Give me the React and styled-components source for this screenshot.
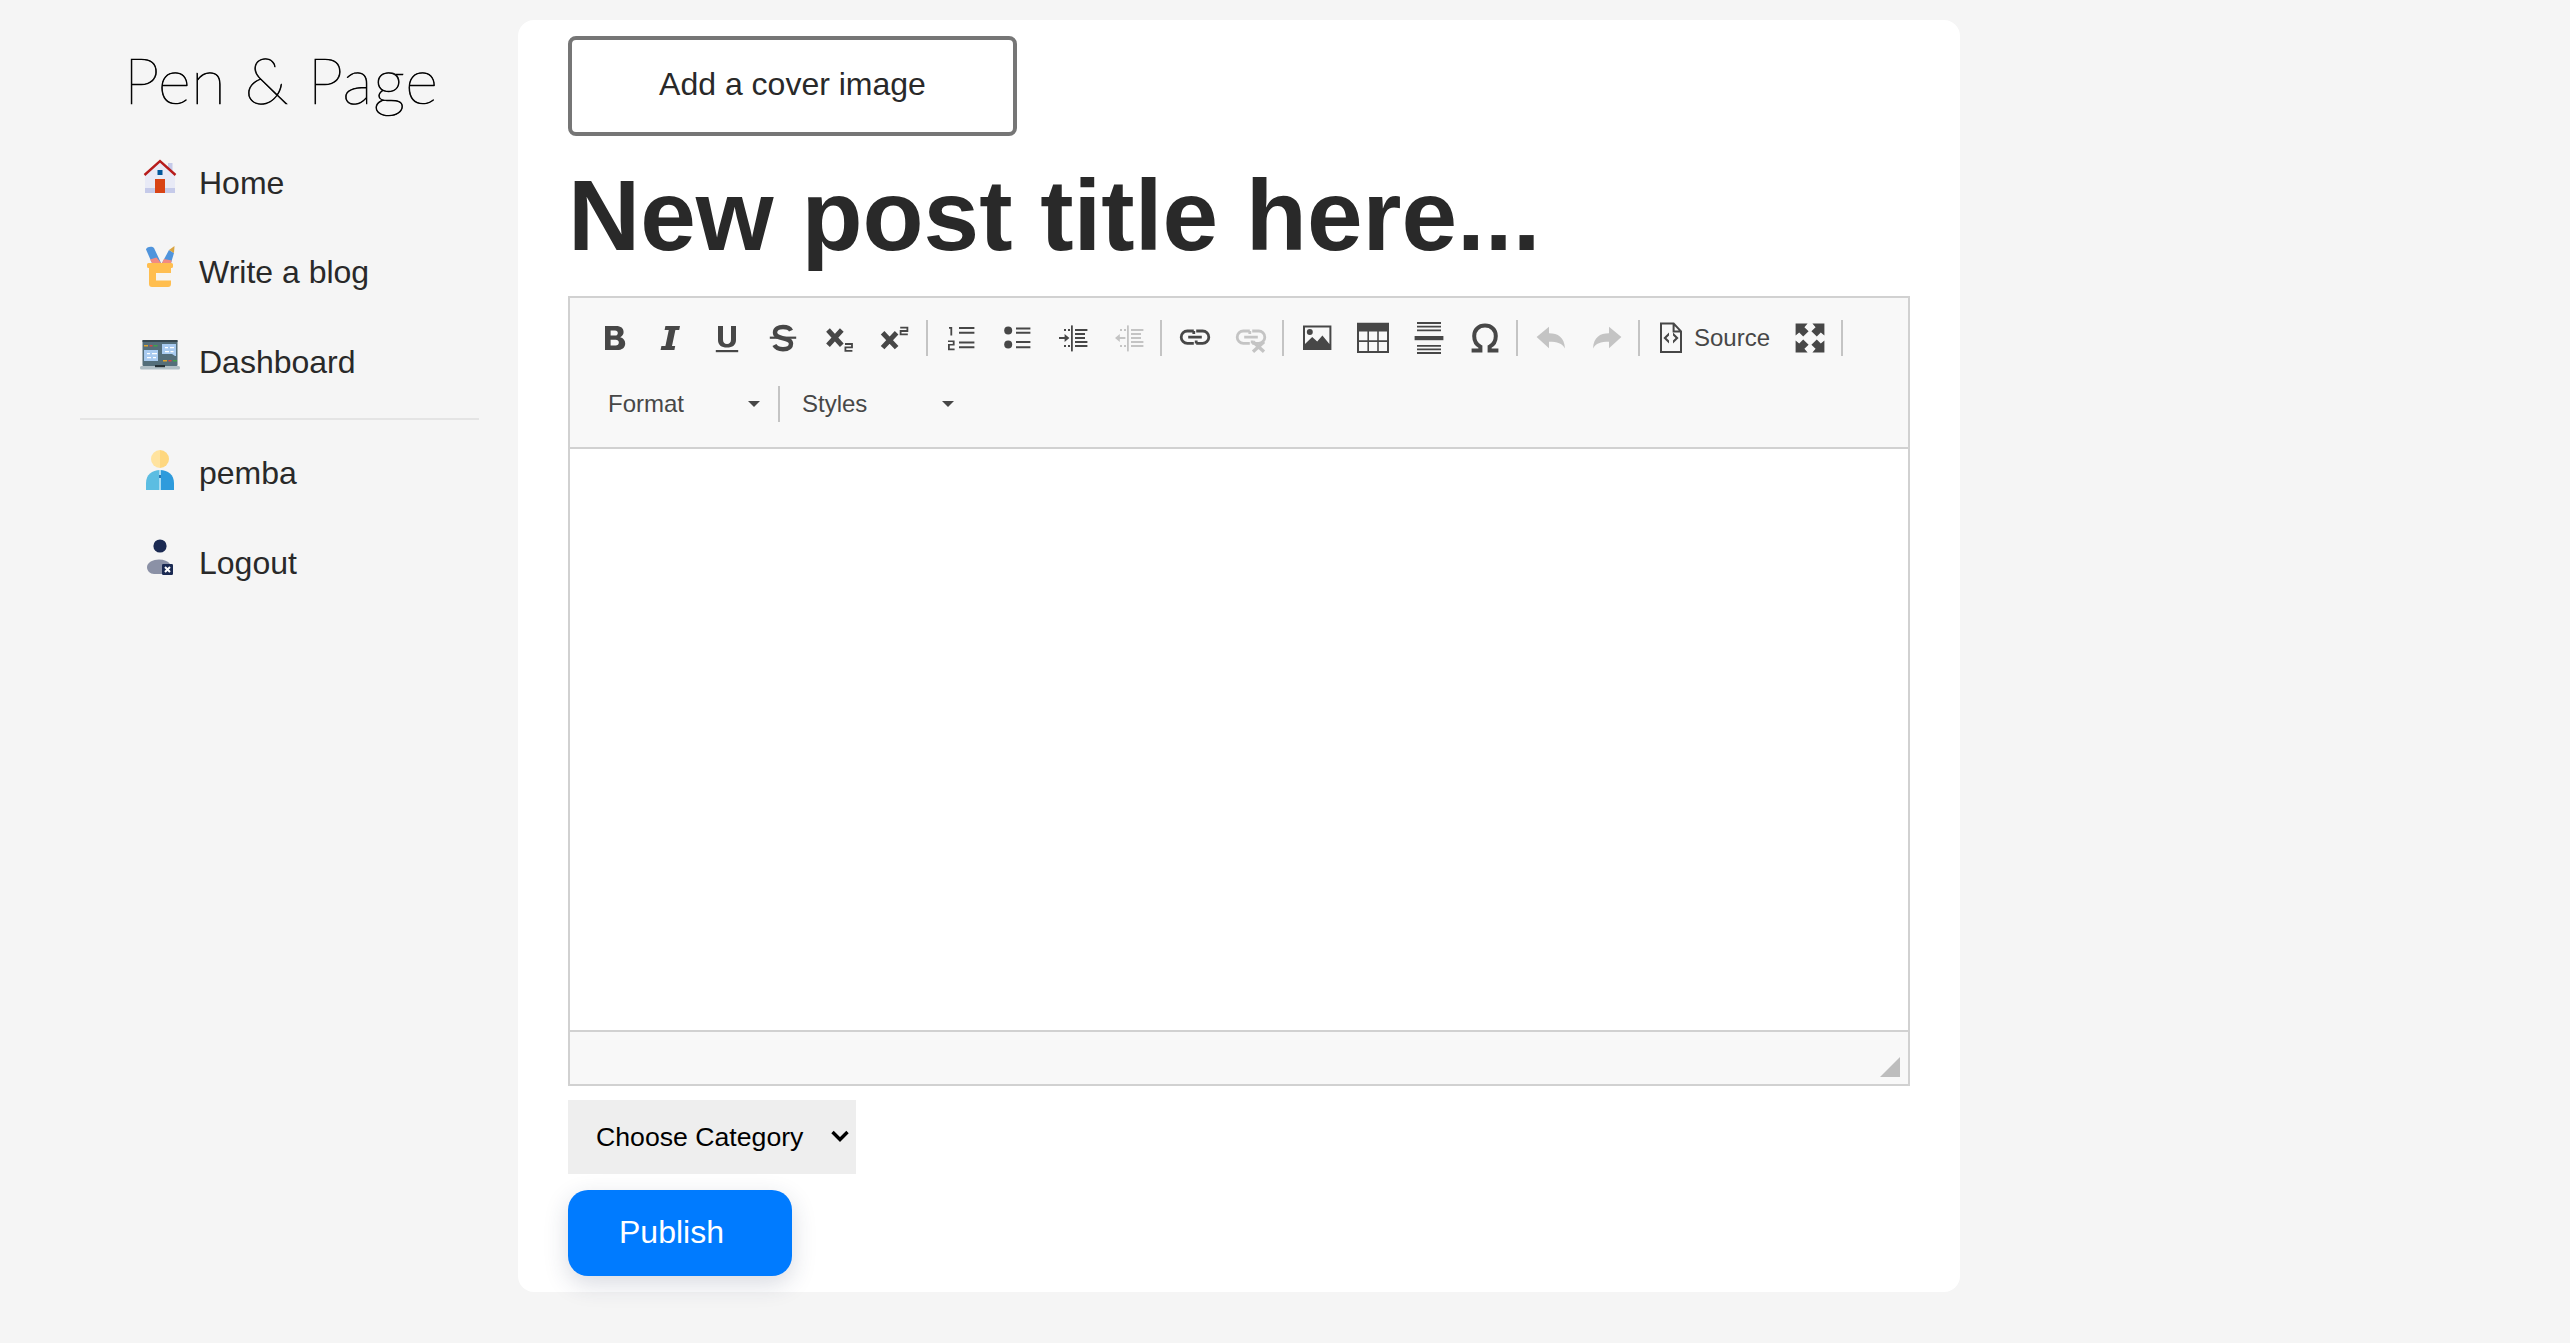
import React from "react";
import styled, { createGlobalStyle } from "styled-components";

const Global = createGlobalStyle`
  html, body { margin: 0; padding: 0; background: #f5f5f5; }
  body { font-family: "Liberation Sans", Arial, sans-serif; color: #292929; }
`;

const Page = styled.div`
  display: flex;
  align-items: flex-start;
  min-height: 1343px;
  box-sizing: border-box;
  padding-top: 20px;
`;
const Sidebar = styled.aside`
  width: 518px;
  flex: none;
  box-sizing: border-box;
  padding: 0 39px 0 80px;
`;
const Logo = styled.div`
  height: 118.5px;
  display: flex;
  align-items: center;
  justify-content: center;
  padding-left: 3px;
  font-family: Lato, "Liberation Sans", sans-serif;
  font-weight: 200;
  font-size: 64px;
  letter-spacing: 0.3px;
  -webkit-text-stroke: 0.7px #000;
  color: #000;
  white-space: nowrap;
`;
const NavItem = styled.a`
  display: flex;
  align-items: center;
  gap: 19px;
  height: 89.5px;
  padding-left: 60px;
  font-size: 32px;
  color: #292929;
`;
const NavIcon = styled.svg`
  width: 40px;
  height: 40px;
  flex: none;
  margin-bottom: 14px;
  overflow: visible;
`;
const Divider = styled.hr`
  border: 0;
  height: 2px;
  background: #e4e4e4;
  margin: 11px 0 9px;
`;
const Card = styled.main`
  width: 1442px;
  height: 1272px;
  flex: none;
  box-sizing: border-box;
  background: #fff;
  border-radius: 16px;
  padding: 16px 50px 0;
`;
const CoverButton = styled.button`
  display: block;
  width: 449px;
  height: 100px;
  box-sizing: border-box;
  background: #fff;
  border: 4px solid #767676;
  border-radius: 8px;
  padding: 0 0 3px;
  font: 32px "Liberation Sans", Arial, sans-serif;
  color: #292929;
`;
const Title = styled.h1`
  margin: 0;
  height: 160px;
  display: flex;
  align-items: center;
  padding-bottom: 2px;
  box-sizing: border-box;
  font-size: 100px;
  font-weight: 700;
  color: #292929;
  white-space: nowrap;
`;
const Editor = styled.div`
  border: 2px solid #d1d1d1;
`;
const Toolbar = styled.div`
  background: #f8f8f8;
  border-bottom: 2px solid #d1d1d1;
  padding: 7px 0 10px 17px;
`;
const ToolRow = styled.div`
  display: flex;
  align-items: center;
  height: 66px;
`;
const ToolButton = styled.span`
  width: ${(p) => (p.$wide ? "137px" : "56px")};
  height: 48px;
  flex: none;
  display: flex;
  align-items: center;
  justify-content: ${(p) => (p.$wide ? "flex-start" : "center")};
  gap: 7px;
  box-sizing: border-box;
  padding-left: ${(p) => (p.$wide ? "10px" : "0")};
  font-size: 24px;
  color: #474747;
`;
const ToolIcon = styled.svg`
  width: 32px;
  height: 32px;
  flex: none;
  color: ${(p) => (p.$muted ? "#c4c4c4" : "#474747")};
`;
const Sep = styled.span`
  width: 2px;
  height: 36px;
  flex: none;
  margin: 0 5px 0 3px;
  background: #c4c4c4;
`;
const Combo = styled.span`
  width: ${(p) => p.$w}px;
  flex: none;
  display: flex;
  align-items: center;
  justify-content: space-between;
  box-sizing: border-box;
  padding: 0 5px 0 21px;
  font-size: 24px;
  color: #474747;
`;
const Caret = styled.i`
  width: 0;
  height: 0;
  border-left: 6px solid transparent;
  border-right: 6px solid transparent;
  border-top: 6px solid #474747;
`;
const ComboSep = styled.span`
  width: 2px;
  height: 36px;
  flex: none;
  margin: 0 1px 0 13px;
  background: #c4c4c4;
`;
const Writing = styled.div`
  height: 581px;
  background: #fff;
`;
const Footer = styled.div`
  height: 54px;
  box-sizing: border-box;
  background: #f8f8f8;
  border-top: 2px solid #d1d1d1;
  display: flex;
  justify-content: flex-end;
  align-items: flex-end;
  padding: 0 8px 7px 0;
`;
const Grip = styled.span`
  width: 20px;
  height: 20px;
  background: #bdbdbd;
  clip-path: polygon(100% 0, 100% 100%, 0 100%);
`;
const SelectWrap = styled.div`
  position: relative;
  width: 288px;
  height: 74px;
  margin: 14px 0 16px;
`;
const CategorySelect = styled.select`
  appearance: none;
  width: 100%;
  height: 100%;
  border: 0;
  border-radius: 0;
  background: #eee;
  color: #000;
  padding: 0 0 0 28px;
  font: 26.67px "Liberation Sans", Arial, sans-serif;
`;
const Chevron = styled.svg`
  position: absolute;
  right: 6px;
  top: 29px;
  width: 20px;
  height: 14px;
  pointer-events: none;
`;
const Publish = styled.button`
  display: block;
  width: 224px;
  height: 86px;
  box-sizing: border-box;
  border: 0;
  border-radius: 20px;
  background: #007bff;
  color: #fff;
  font: 32px "Liberation Sans", Arial, sans-serif;
  text-align: left;
  padding: 0 0 2px 51px;
  box-shadow: 0 8px 24px rgba(40, 50, 90, 0.18);
`;

const nav = (vb, body) => (
  <NavIcon viewBox={vb} aria-hidden="true">{body}</NavIcon>
);

const HomeIcon = () => nav("10 6 40 40", <>
  <rect x="38" y="13" width="4.500" height="9" fill="#c5cae9" />
  <path d="M15 25 30 12l15 13v18H15z" fill="#e8eaf6" />
  <rect x="15" y="38" width="30" height="5" fill="#c5cae9" />
  <rect x="25" y="29" width="10" height="14" fill="#d84315" />
  <rect x="27.500" y="20" width="5" height="5" fill="#01579b" />
  <path d="M14.500 25 30 11l15.500 14" fill="none" stroke="#b71c1c" strokeWidth="2.400" />
</>);
const WriteIcon = () => nav("10 5 40 40", <>
  <path d="M16 8.500C16 6 22 4.500 24 7l7 15h-9z" fill="#4f94dc" />
  <path d="M20 18.500l6.500-2L31 22h-9z" fill="#f28b82" />
  <path d="M32 22 39 9l5 3-3 10z" fill="#4f94dc" />
  <path d="M39 9l5.500-4-.5 7z" fill="#d9a441" />
  <path d="M32 22l2-4 7.800 1.500L41 22z" fill="#f28b82" />
  <path d="M17 23.500A1.500 1.500 0 0 1 18.500 22h23a1.500 1.500 0 0 1 1.500 1.500v2a1.500 1.500 0 0 1-1.500 1.500H41v16a3 3 0 0 1-3 3H22a3 3 0 0 1-3-3V27h-.5a1.500 1.500 0 0 1-1.500-1.500z" fill="#ffbe4f" />
  <rect x="26" y="32" width="15" height="7.500" fill="#f7f4ee" />
</>);
const DashIcon = () => nav("10 4 40 40", <>
  <rect x="12.500" y="9" width="35" height="26" rx="1" fill="#546e7a" />
  <rect x="12.500" y="9" width="35" height="2" fill="#37474f" />
  <rect x="10" y="35" width="40" height="3.500" rx="1.500" fill="#b0bec5" />
  <rect x="25" y="34" width="10" height="2.200" fill="#263238" />
  <path d="M14 19h14v11H14z" fill="#a9cbf0" />
  <path d="M32 13h14v12h-1l-3-2H32z" fill="#a9cbf0" />
  <path d="M17 22h3v1.200h-3zM22 22h5v1.200h-5zM17 26h4v1.200h-4zM23 26h3v1.200h-3zM35 16h3v1.200h-3zM40 16h4v1.200h-4zM35 20h4v1.200h-4zM40.500 20h3v1.200h-3z" fill="#fff" />
  <path d="M14 14h4v1.500h-4z" fill="#e0a52e" />
  <path d="M19.500 14h3v1.500h-3z" fill="#d64545" />
  <path d="M23.500 14h4v1.500h-4z" fill="#43a047" />
  <path d="M33 29h4v1.500h-4z" fill="#e0a52e" />
  <path d="M38.500 29h3v1.500h-3z" fill="#d64545" />
  <path d="M43 29h4v1.500h-4z" fill="#43a047" />
</>);
const UserIcon = () => nav("10 5 40 40", <>
  <path d="M30 8a9 9 0 0 0 0 18z" fill="#ffe39f" />
  <path d="M30 8a9 9 0 0 1 0 18z" fill="#fed77f" />
  <path d="M30 28c-8 0-14 5-14 13v7h14z" fill="#5cbde2" />
  <path d="M30 28c8 0 14 5 14 13v7H30z" fill="#2e9bdc" />
  <rect x="29" y="28" width="2" height="20" fill="#a9dcf2" />
  <rect x="29" y="33" width="2" height="3" fill="#2b7bb5" />
</>);
const LogoutIcon = () => nav("10 5 40 40", <>
  <circle cx="30" cy="15" r="6.600" fill="#1b2a52" />
  <path d="M17 36c0-4.500 6-7.500 12-7.500 5 0 9 1.500 11 4.500v10H24c-4 0-7-3-7-7z" fill="#8b91a6" />
  <rect x="32" y="33" width="11" height="11" rx="1.200" fill="#1b2a52" />
  <path d="M35 36l5 5M40 36l-5 5" stroke="#fff" strokeWidth="2" />
</>);

const Tool = ({ muted, children }) => (
  <ToolIcon viewBox="0 0 16 16" $muted={muted} fill="currentColor" aria-hidden="true">{children}</ToolIcon>
);
const Lines = ({ x1, x2, ys, w = 1 }) => (
  <path d={ys.map((y) => `M${x1} ${y}H${x2}`).join("")} stroke="currentColor" strokeWidth={w} fill="none" />
);
const IndentBody = ({ dir }) => (
  <>
    <rect x="7" y="1.700" width="0.900" height="13" />
    <Lines x1="9" x2="15.200" ys={[4, 10, 12]} />
    <Lines x1="9" x2="14" ys={[6, 8]} />
    <path d="M3.500 3.500h1v1h-1zM5.500 3.500h1v1h-1zM3.500 11.500h1v1h-1zM5.500 11.500h1v1h-1z" />
    {dir === "in"
      ? <path d="M1 7.500h2.800V6L6.200 8 3.800 10V8.500H1z" />
      : <path d="M6.200 7.500H3.400V6L1 8l2.400 2V8.500h2.800z" />}
  </>
);
const LinkBody = () => (
  <path d="M7.400 4.500H4.200a3.100 3.100 0 0 0 0 6.200h3.200M8.600 4.500h3.200a3.100 3.100 0 0 1 0 6.200H8.600M4.600 7.600h6.800M7.400 4.500v1.500M8.600 9.200v1.500" fill="none" stroke="currentColor" strokeWidth="1.400" />
);

const Icons = {
  bold: <Tool><path fillRule="evenodd" d="M3 2h5.600c2.300 0 3.700 1.100 3.700 3 0 1.200-.6 2.100-1.700 2.600 1.500.4 2.500 1.500 2.500 3.100 0 2.100-1.600 3.300-4 3.300H3zM5.800 4.200v2.600h2.200c.9 0 1.400-.5 1.400-1.300S8.900 4.200 8 4.200zM5.800 8.900v2.900h2.500c1 0 1.600-.5 1.600-1.500s-.6-1.400-1.600-1.400z" /></Tool>,
  italic: <Tool><path d="M5.200 2h7.300l-.4 2h-1.900L8.500 12h1.600l-.4 2H2.800l.4-2h2L6.900 4H4.800z" /></Tool>,
  underline: <Tool><path d="M3.500 2H6v6.800c0 1.500.7 2.200 2 2.200s2-.7 2-2.200V2h2.500v7c0 2.500-1.700 3.800-4.500 3.800S3.500 11.500 3.500 9z" /><rect x="2.400" y="14" width="11.200" height="1.100" /></Tool>,
  strike: <Tool><path d="M12 4.300C11.400 3 10 2.500 8 2.500c-2.300 0-4 .9-4 2.800 0 3.900 8 1.900 8 5.600 0 1.900-1.800 2.700-4 2.700-2.200 0-3.600-.7-4.300-2.100" fill="none" stroke="currentColor" strokeWidth="2.200" /><rect x="1.400" y="7.300" width="13.200" height="1.100" /></Tool>,
  sub: <Tool><path d="M2.500 4 9.400 11.600M9.400 4 2.500 11.600" fill="none" stroke="currentColor" strokeWidth="2.500" /><path d="M11 11h3.500v1.700H11.200v1.700h3.500" fill="none" stroke="currentColor" strokeWidth=".9" /></Tool>,
  sup: <Tool><path d="M1.800 5.400 8.800 12.800M8.800 5.400 1.800 12.800" fill="none" stroke="currentColor" strokeWidth="2.500" /><path d="M10.600 2.800h3.600v1.700H10.800v1.700h3.600" fill="none" stroke="currentColor" strokeWidth=".9" /></Tool>,
  numlist: <Tool><path d="M2 2.500h1.600v4.300h-.9V3.400H2zM1.500 9.200h3.300v2.600H2.400v1.400h2.400v.9H1.500v-3.100h2.400V10H1.500z" /><Lines x1="7" x2="14.700" ys={[3, 5.400, 10.200, 12.600]} /></Tool>,
  bullist: <Tool><circle cx="3.600" cy="4.300" r="2" /><circle cx="3.600" cy="11.300" r="2" /><Lines x1="7.500" x2="14.700" ys={[3.200, 5.400, 10, 12.600]} /></Tool>,
  indent: <Tool><IndentBody dir="in" /></Tool>,
  outdent: <Tool muted><IndentBody dir="out" /></Tool>,
  link: <Tool><LinkBody /></Tool>,
  unlink: <Tool muted><LinkBody /><path d="M9 9.900l5.500 5M14.500 9.900l-5.500 5" fill="none" stroke="currentColor" strokeWidth="1.700" /></Tool>,
  image: <Tool><path fillRule="evenodd" d="M1 1.700h14.200V14H1zM2 2.700v8.300l3.600-3.500 2.500 2.300 2.600-3 3.500 4.200V2.700z" /><circle cx="4.400" cy="5" r="1.500" /></Tool>,
  table: <Tool><path fillRule="evenodd" d="M0 .4h16V15.500H0zM1 4.700v4.400h4.200V4.700zM6 4.700v4.400h4.100V4.700zM10.900 4.700v4.400H15V4.700zM1 10v4.500h4.200V10zM6 10v4.500h4.100V10zM10.900 10v4.500H15V10z" /></Tool>,
  hr: <Tool><Lines x1="2" x2="14" ys={[0.500, 2.300, 4.200, 11.900, 13.700, 15.500]} w={0.900} /><rect x=".8" y="7" width="14.400" height="2.100" /></Tool>,
  omega: <Tool><path d="M1.300 14.200h4.400v-1.800C3.800 11.400 2.600 9.400 2.600 7 2.600 3.900 4.800 1.800 8 1.800s5.400 2.100 5.400 5.200c0 2.400-1.200 4.400-3.100 5.400v1.800h4.400" fill="none" stroke="currentColor" strokeWidth="2" /></Tool>,
  undo: <Tool muted><path d="M.8 7.500 7 2.400v3.200c4.600 0 7.600 2 8 7.600-1.400-2.500-3.800-3.300-8-3.300v3.200z" /></Tool>,
  redo: <Tool muted><path d="M15.200 7.500 9 2.400v3.200c-4.600 0-7.600 2-8 7.600 1.400-2.500 3.800-3.300 8-3.300v3.200z" /></Tool>,
  source: <Tool><path d="M3 .8h6.300L13 4.700V15H3zM9.300.8v3.900H13" fill="none" stroke="currentColor" strokeWidth="1" /><path d="M7 5.200 4.200 8 7 10.800V9.300L5.700 8 7 6.700zM9 5.200 11.800 8 9 10.800V9.300L10.300 8 9 6.700z" /></Tool>,
  max: <Tool><path d="M.8.800h6L5.200 2.600l2.100 2L4.600 7.300l-2-2.100L.8 6.800zM15.200.8h-6l1.600 1.800-2.100 2 2.700 2.700 2-2.100 1.800 1.600zM.8 15.200h6l-1.600-1.800 2.100-2-2.700-2.700-2 2.100L.8 9.200zM15.200 15.200h-6l1.600-1.800-2.100-2 2.700-2.700 2 2.100 1.800-1.600z" /></Tool>,
};

const groups = [
  ["bold", "italic", "underline", "strike", "sub", "sup"],
  ["numlist", "bullist", "indent", "outdent"],
  ["link", "unlink"],
  ["image", "table", "hr", "omega"],
  ["undo", "redo"],
];

export default function App() {
  return (
    <>
      <Global />
      <Page>
        <Sidebar>
          <Logo>Pen &amp; Page</Logo>
          <NavItem><HomeIcon />Home</NavItem>
          <NavItem><WriteIcon />Write a blog</NavItem>
          <NavItem><DashIcon />Dashboard</NavItem>
          <Divider />
          <NavItem><UserIcon />pemba</NavItem>
          <NavItem><LogoutIcon />Logout</NavItem>
        </Sidebar>
        <Card>
          <CoverButton>Add a cover image</CoverButton>
          <Title>New post title here...</Title>
          <Editor>
            <Toolbar>
              <ToolRow>
                {groups.map((g, i) => (
                  <React.Fragment key={i}>
                    {g.map((name) => <ToolButton key={name}>{Icons[name]}</ToolButton>)}
                    <Sep />
                  </React.Fragment>
                ))}
                <ToolButton $wide>{Icons.source}Source</ToolButton>
                <ToolButton>{Icons.max}</ToolButton>
                <Sep />
              </ToolRow>
              <ToolRow>
                <Combo $w={178}>Format<Caret /></Combo>
                <ComboSep />
                <Combo $w={178}>Styles<Caret /></Combo>
              </ToolRow>
            </Toolbar>
            <Writing />
            <Footer><Grip /></Footer>
          </Editor>
          <SelectWrap>
            <CategorySelect defaultValue="">
              <option value="">Choose Category</option>
            </CategorySelect>
            <Chevron viewBox="0 0 20 14" aria-hidden="true">
              <path d="M2.500 3 10 10.500 17.500 3" fill="none" stroke="#000" strokeWidth="3.400" />
            </Chevron>
          </SelectWrap>
          <Publish>Publish</Publish>
        </Card>
      </Page>
    </>
  );
}
